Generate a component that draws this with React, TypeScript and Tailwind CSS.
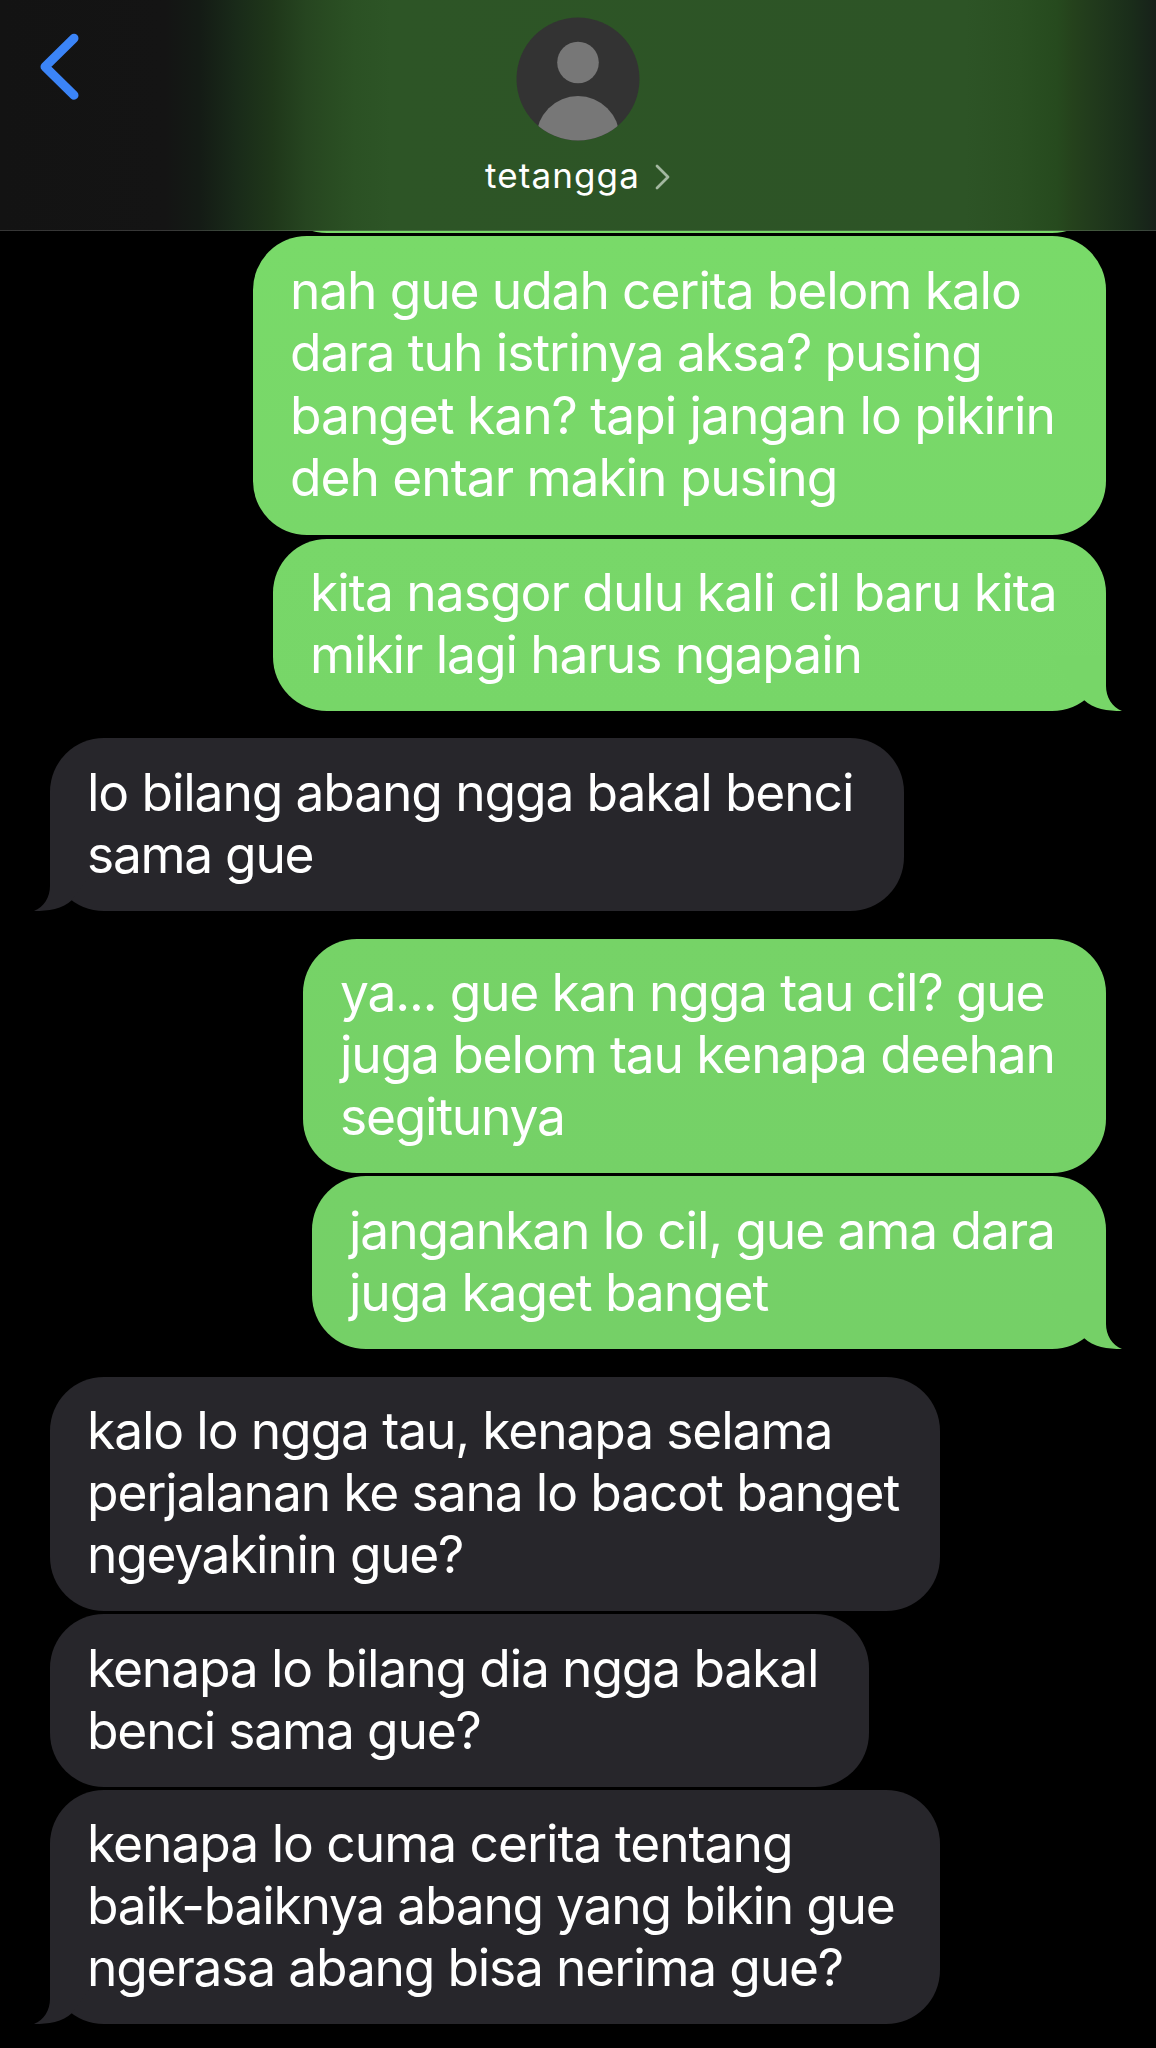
import clsx from "clsx";

interface Line {
  text: string;
  tracking: string;
}

interface Message {
  sent: boolean;
  tail?: boolean;
  // outer size, spacing above, leading and fill of the bubble
  box: string;
  lines: Line[];
}

const messages: Message[] = [
  {
    sent: true,
    box: "mt-[3px] h-[299px] w-[853px] pt-[23px] leading-[62.4px] bg-linear-to-b from-[#79da69] to-[#78d769] fill-[#78d769]",
    lines: [
      { text: "nah gue udah cerita belom kalo", tracking: "tracking-[-1.12px]" },
      { text: "dara tuh istrinya aksa? pusing", tracking: "tracking-[-1.08px]" },
      { text: "banget kan? tapi jangan lo pikirin", tracking: "tracking-[-1.04px]" },
      { text: "deh entar makin pusing", tracking: "tracking-[-1.04px]" },
    ],
  },
  {
    sent: true,
    tail: true,
    box: "mt-1 h-[172px] w-[833px] pt-[22px] leading-[62px] bg-linear-to-b from-[#78d769] to-[#77d668] fill-[#77d668]",
    lines: [
      { text: "kita nasgor dulu kali cil baru kita", tracking: "tracking-[-0.98px]" },
      { text: "mikir lagi harus ngapain", tracking: "tracking-[-1.08px]" },
    ],
  },
  {
    sent: false,
    tail: true,
    box: "mt-[27px] h-[173px] w-[854px] pt-[23px] leading-[62px] bg-[#27262b] fill-[#27262b]",
    lines: [
      { text: "lo bilang abang ngga bakal benci", tracking: "tracking-[-1.12px]" },
      { text: "sama gue", tracking: "tracking-[-1.3px]" },
    ],
  },
  {
    sent: true,
    box: "mt-7 h-[234px] w-[803px] pt-[22px] leading-[62px] bg-linear-to-b from-[#76d367] to-[#75d167] fill-[#75d167]",
    lines: [
      { text: "ya... gue kan ngga tau cil? gue", tracking: "tracking-[-1.16px]" },
      { text: "juga belom tau kenapa deehan", tracking: "tracking-[-1.14px]" },
      { text: "segitunya", tracking: "tracking-[-1.25px]" },
    ],
  },
  {
    sent: true,
    tail: true,
    box: "mt-[3px] h-[173px] w-[794px] pt-[23px] leading-[62px] bg-linear-to-b from-[#75d167] to-[#75d067] fill-[#75d067]",
    lines: [
      { text: "jangankan lo cil, gue ama dara", tracking: "tracking-[-1.11px]" },
      { text: "juga kaget banget", tracking: "tracking-[-1.1px]" },
    ],
  },
  {
    sent: false,
    box: "mt-7 h-[234px] w-[890px] pt-[22px] leading-[62px] bg-[#27262b] fill-[#27262b]",
    lines: [
      { text: "kalo lo ngga tau, kenapa selama", tracking: "tracking-[-1.13px]" },
      { text: "perjalanan ke sana lo bacot banget", tracking: "tracking-[-1.13px]" },
      { text: "ngeyakinin gue?", tracking: "tracking-[-1.3px]" },
    ],
  },
  {
    sent: false,
    box: "mt-[3px] h-[173px] w-[819px] pt-[23px] leading-[62px] bg-[#27262b] fill-[#27262b]",
    lines: [
      { text: "kenapa lo bilang dia ngga bakal", tracking: "tracking-[-1.14px]" },
      { text: "benci sama gue?", tracking: "tracking-[-1.18px]" },
    ],
  },
  {
    sent: false,
    tail: true,
    box: "mt-[3px] h-[234px] w-[890px] pt-[22px] leading-[62px] bg-[#27262b] fill-[#27262b]",
    lines: [
      { text: "kenapa lo cuma cerita tentang", tracking: "tracking-[-1.04px]" },
      { text: "baik-baiknya abang yang bikin gue", tracking: "tracking-[-1.25px]" },
      { text: "ngerasa abang bisa nerima gue?", tracking: "tracking-[-1.2px]" },
    ],
  },
];

const Avatar = () => (
  <svg viewBox="0 0 124 124" className="h-[124px] w-[124px]">
    <defs>
      <clipPath id="avatar-clip">
        <circle cx="62" cy="62" r="61.5" />
      </clipPath>
    </defs>
    <g clipPath="url(#avatar-clip)">
      <rect width="124" height="124" fill="#333333" />
      <circle cx="62" cy="45.5" r="20.8" fill="#777777" />
      <circle cx="62" cy="120.5" r="41.5" fill="#777777" />
    </g>
  </svg>
);

const Tail = ({ sent }: { sent: boolean }) => (
  <svg
    viewBox="0 0 70 55"
    className={clsx(
      "absolute bottom-0 h-[55px] w-[70px] fill-inherit",
      sent ? "-right-4" : "-left-4 -scale-x-100"
    )}
  >
    <path d="M0 0H54V30C54 41 60 51 70 55C56 55 41 53 32 44Z" />
  </svg>
);

const Bubble = ({ message }: { message: Message }) => (
  <div
    className={clsx(
      "relative shrink-0 rounded-[54px] pl-[37px]",
      message.sent ? "self-end" : "self-start",
      message.box
    )}
  >
    {message.tail && <Tail sent={message.sent} />}
    <div className="relative whitespace-nowrap text-[51.5px] text-white">
      {message.lines.map((line) => (
        <p key={line.text} className={line.tracking}>
          {line.text}
        </p>
      ))}
    </div>
  </div>
);

const Header = () => (
  <header className="relative z-10 grid h-[231px] shrink-0 grid-cols-[1fr_auto_1fr] items-start border-b border-white/15 bg-[linear-gradient(to_right,#131313_0px,#141414_165px,#141b15_200px,#192a19_236px,#1f371a_273px,#264520_306px,#294c22_332px,#2b5124_354px,#2d5526_391px,#2d5426_965px,#2a5022_1020px,#264a1e_1057px,#25421c_1072px,#213a1c_1094px,#1a2d1a_1131px,#17211a_1156px)]">
    <button aria-label="Back" className="justify-self-start pl-9 pt-7">
      <svg viewBox="0 0 48 78" className="h-[78px] w-12" fill="none">
        <path
          d="M38 10.2L9 38.7L38 67.2"
          stroke="#3b84f7"
          strokeWidth="9"
          strokeLinecap="round"
          strokeLinejoin="round"
        />
      </svg>
    </button>
    <div className="flex flex-col items-center pt-[17px]">
      <Avatar />
      <div className="mt-[13px] flex h-[42px] items-center pl-px">
        <span className="text-[35px] leading-[42px] tracking-[1.1px] text-white">tetangga</span>
        <svg viewBox="0 0 18 28" className="ml-[14px] mt-[3px] h-7 w-[18px]" fill="none">
          <path
            d="M3 3L14 14L3 25"
            stroke="#a3b8a0"
            strokeWidth="2.8"
            strokeLinecap="round"
            strokeLinejoin="round"
          />
        </svg>
      </div>
    </div>
  </header>
);

export default function App() {
  return (
    <div className="flex h-[2048px] w-[1156px] flex-col overflow-hidden bg-black font-['Inter',sans-serif]">
      <Header />
      <main className="flex flex-col px-[50px]">
        {/* earlier message, scrolled under the header */}
        <div className="-mt-[118px] h-[120px] w-[833px] shrink-0 self-end rounded-[54px] bg-[#79da69]" />
        {messages.map((message) => (
          <Bubble key={message.lines[0].text} message={message} />
        ))}
      </main>
    </div>
  );
}
